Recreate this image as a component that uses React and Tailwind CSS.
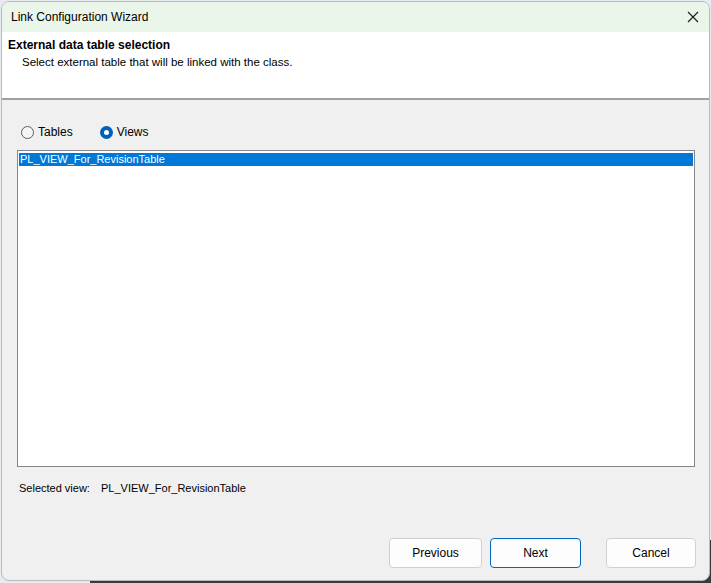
import React from 'react'

const font = { fontFamily: '"Liberation Sans", Arial, sans-serif' }

const Radio = ({ checked, label }) => (
    <label className="flex items-center gap-[4px] text-[12px] text-black">
        <span className={
            checked
                ? "w-[13px] h-[13px] rounded-full bg-[#005fb8] flex items-center justify-center"
                : "w-[13px] h-[13px] rounded-full border border-[#5e5e5e] bg-[#f5f5f5]"
        }>
            {checked && <span className="w-[5px] h-[5px] rounded-full bg-white"/>}
        </span>
        <span>{label}</span>
    </label>
)

const Button = ({ children, primary, className = "" }) => (
    <button
        type="button"
        className={
            "h-[30px] rounded-[4px] bg-[#fdfdfd] text-[12px] text-black " +
            (primary ? "border border-[#0067c0] " : "border border-[#d0d0d0] ") +
            className
        }
    >
        {children}
    </button>
)

export default function App() {
    return (
        <div className="w-[711px] h-[583px] bg-[#3a3a3a] relative overflow-hidden" style={font}>
            <div className="absolute left-0 top-0 w-[711px] h-[540px] bg-[#e8ecf0]"/>
            <div className="absolute left-0 top-[540px] w-[90px] h-[43px] bg-[#e8ecf0]"/>
            {/* window */}
            <div className="absolute left-[1px] top-[1px] w-[709px] h-[580px] bg-[#f0f0f0] border border-[#b9b9b9] rounded-t-[8px] rounded-b-[8px] overflow-hidden flex flex-col">
                {/* title bar */}
                <div className="h-[30px] bg-[#eaf6ea] flex items-center pl-[9px] pr-[10px] shrink-0">
                    <span className="text-[12px] text-black">Link Configuration Wizard</span>
                    <svg className="ml-auto" width="12" height="12" viewBox="0 0 12 12">
                        <path d="M1 1 L11 11 M11 1 L1 11" stroke="#1a1a1a" strokeWidth="1.1" fill="none"/>
                    </svg>
                </div>

                {/* header */}
                <div className="h-[68px] bg-white border-b-2 border-[#a0a0a0] shrink-0 pl-[6px] pt-[6px]">
                    <div className="text-[12px] font-bold text-black leading-[15px]">External data table selection</div>
                    <div className="text-[11.5px] text-black pl-[14px] mt-[2px] leading-[14px]">Select external table that will be linked with the class.</div>
                </div>

                {/* body */}
                <div className="flex-1 flex flex-col pl-[15px]">
                    <div className="flex items-center gap-[27px] pl-[4px] mt-[25px] h-[14px]">
                        <Radio label="Tables"/>
                        <Radio checked label="Views"/>
                    </div>

                    <div className="mt-[11px] h-[317px] w-[678px] bg-white border border-[#828790] p-[1px]">
                        <div className="h-[13px] bg-[#0078d7] text-white text-[11px] leading-[13px] pl-[1px] mt-[1px]">
                            PL_VIEW_For_RevisionTable
                        </div>
                    </div>

                    <div className="flex text-[11px] text-black mt-[13px] pl-[2px]">
                        <span className="w-[82px]">Selected view:</span>
                        <span>PL_VIEW_For_RevisionTable</span>
                    </div>

                    <div className="flex mt-auto mb-[12px] pl-[372px]">
                        <Button className="w-[93px]">Previous</Button>
                        <Button primary className="w-[91px] ml-[8px]">Next</Button>
                        <Button className="w-[90px] ml-[25px]">Cancel</Button>
                    </div>
                </div>
            </div>
        </div>
    )
}
